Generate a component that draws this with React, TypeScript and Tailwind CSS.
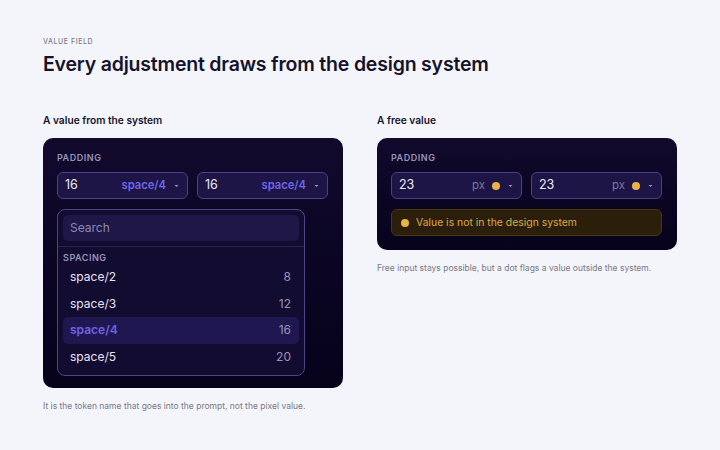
import React from "react";

const Chevron = () => (
  <svg width="7" height="8" viewBox="0 0 7 8" className="ml-[7px] shrink-0">
    <path d="M1.5 3 L3.5 5 L5.5 3 Z" fill="#9a93b8" />
  </svg>
);

function TokenInput() {
  return (
    <div className="flex h-[27px] w-[131px] items-center rounded-[6px] border border-[#4a4283] bg-[#1c1545] pl-[7px] pr-[7px]">
      <span className="text-[12.5px] text-[#ecebf5]">16</span>
      <span className="ml-auto text-[11.2px] font-semibold text-[#7266ee]">space/4</span>
      <Chevron />
    </div>
  );
}

function FreeInput() {
  return (
    <div className="flex h-[27px] w-[131px] items-center rounded-[6px] border border-[#4a4283] bg-[#1c1545] pl-[7px] pr-[7px]">
      <span className="text-[12.5px] text-[#ecebf5]">23</span>
      <span className="ml-auto text-[11.5px] text-[#7d76a0]">px</span>
      <span className="ml-[7px] h-[8px] w-[8px] shrink-0 rounded-full bg-[#e9b447]" />
      <Chevron />
    </div>
  );
}

const rows = [
  { name: "space/2", v: "8" },
  { name: "space/3", v: "12" },
  { name: "space/4", v: "16", active: true },
  { name: "space/5", v: "20" },
];

export default function App() {
  return (
    <div
      className="h-[450px] w-[720px] bg-[#f4f5fa] pl-[43px] pt-[37px]"
      style={{ fontFamily: "Inter, 'Noto Sans', sans-serif" }}
    >
      <div className="text-[7px] font-medium leading-[9px] tracking-[0.08em] text-[#7c7b88]">VALUE FIELD</div>
      <h1 className="mt-[5px] text-[19.5px] font-semibold leading-[26px] tracking-[-0.01em] text-[#15122b]">
        Every adjustment draws from the design system
      </h1>
      <div className="mt-[36px] flex gap-[34px]">
        <div className="w-[300px]">
          <div className="text-[10.2px] font-semibold leading-[14px] text-[#15122b]">A value from the system</div>
          <div className="mt-[11px] flex h-[250px] flex-col rounded-[10px] bg-gradient-to-b from-[#110a2d] to-[#06021a] p-[14px]">
            <div className="text-[9px] font-semibold leading-[12px] tracking-[0.06em] text-[#9a93b8]">PADDING</div>
            <div className="mt-[8px] flex gap-[9px]">
              <TokenInput />
              <TokenInput />
            </div>
            <div className="mt-[10px] w-[248px] rounded-[8px] border border-[#4d4585] bg-[#130c31]">
              <div className="border-b border-[#2a2255] p-[5px]">
                <div className="flex h-[26px] items-center rounded-[5px] bg-[#1e1748] px-[7px] text-[12px] text-[#8f87b2]">
                  Search
                </div>
              </div>
              <div className="px-[5px] pb-[5px]">
                <div className="pt-[5px] text-[9px] font-semibold leading-[12px] tracking-[0.06em] text-[#9a93b8]">SPACING</div>
                {rows.map((r) => (
                  <div
                    key={r.name}
                    className={
                      "flex h-[26.5px] items-center rounded-[5px] pl-[7px] pr-[8px] text-[12px] " +
                      (r.active ? "bg-[#1f1850]" : "")
                    }
                  >
                    <span className={r.active ? "font-semibold text-[#6f63e6]" : "text-[#e6e4f2]"}>{r.name}</span>
                    <span className="ml-auto text-[#9a93b8]">{r.v}</span>
                  </div>
                ))}
              </div>
            </div>
          </div>
          <div className="mt-[12px] text-[8.5px] leading-[12px] text-[#7a7986]">
            It is the token name that goes into the prompt, not the pixel value.
          </div>
        </div>
        <div className="w-[300px]">
          <div className="text-[10.2px] font-semibold leading-[14px] text-[#15122b]">A free value</div>
          <div className="mt-[11px] flex h-[112px] flex-col rounded-[10px] bg-gradient-to-b from-[#110a2d] to-[#07031b] p-[14px]">
            <div className="text-[9px] font-semibold leading-[12px] tracking-[0.06em] text-[#9a93b8]">PADDING</div>
            <div className="mt-[8px] flex gap-[9px]">
              <FreeInput />
              <FreeInput />
            </div>
            <div className="mt-[10px] flex h-[27px] w-[271px] items-center rounded-[6px] border border-[#4a3612] bg-[#2b1e0b] px-[9px]">
              <span className="h-[8px] w-[8px] rounded-full bg-[#e9b447]" />
              <span className="ml-[7px] text-[10.4px] text-[#dcaa4c]">Value is not in the design system</span>
            </div>
          </div>
          <div className="mt-[12px] text-[8.5px] leading-[12px] text-[#7a7986]">
            Free input stays possible, but a dot flags a value outside the system.
          </div>
        </div>
      </div>
    </div>
  );
}
